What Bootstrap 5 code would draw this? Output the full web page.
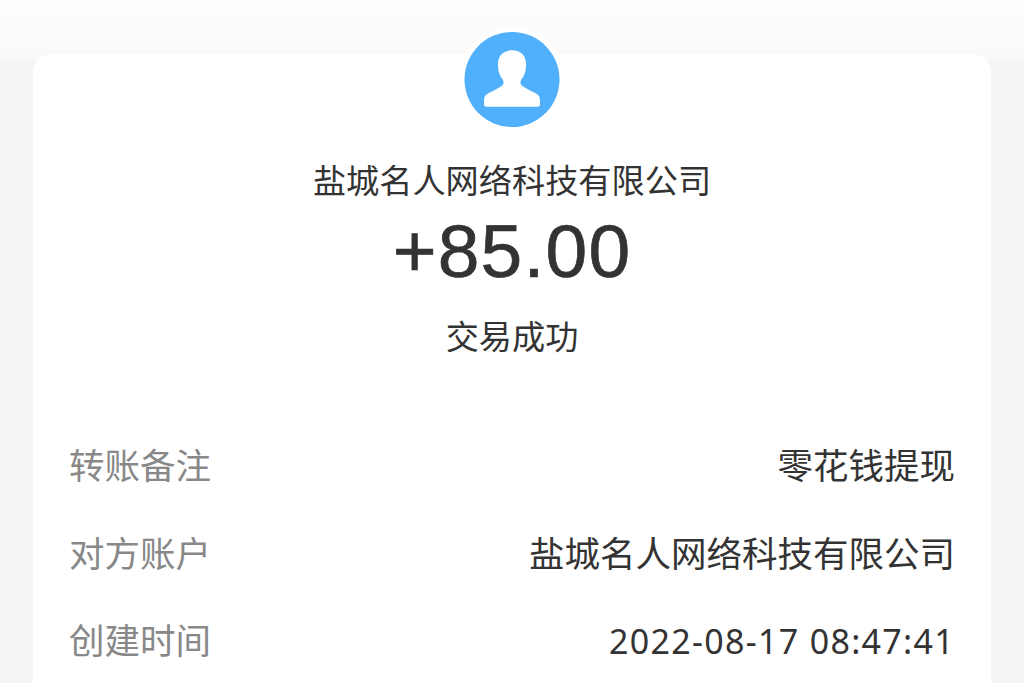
<!DOCTYPE html>
<html lang="zh-CN">
<head>
<meta charset="utf-8">
<meta name="viewport" content="width=device-width, initial-scale=1">
<title>交易详情</title>
<link href="https://cdn.jsdelivr.net/npm/bootstrap@5.3.0/dist/css/bootstrap.min.css" rel="stylesheet">
<style>
body{height:683px;background:linear-gradient(#fefefe 0,#f9f9f9 58px,#f5f5f5 64px,#f5f5f5 100%);color:#333;font-family:"Noto Sans","Noto Sans CJK SC",sans-serif}
.bill{margin:53px 33px 0;height:630px;border-radius:20px 20px 0 0;padding:0 36px}
.avatar{width:108px;height:108px;margin-top:-27px}
.payee,.state{font-family:"Noto Sans CJK SC",sans-serif;font-size:33.2px;line-height:48px}
.payee{margin-top:21px}
.amount{font-family:"Liberation Sans",sans-serif;font-size:75px;line-height:84px;letter-spacing:1.2px;-webkit-text-stroke:.7px #333;margin-top:6px}
.state{margin-top:18px}
.details{margin-top:79px}
.entry{height:87.5px;font-family:"Noto Sans CJK SC",sans-serif;font-size:35.5px;line-height:52px}
.entry dt{color:#888}
.stamp{font-family:"Noto Sans",sans-serif;font-size:34px;letter-spacing:1.3px;padding-top:2px}
</style>
</head>
<body class="overflow-hidden">
<main class="bill bg-white d-flex flex-column">
<header class="d-flex flex-column align-items-center">
<svg class="avatar" viewBox="0 0 108 108" aria-hidden="true">
<circle cx="54" cy="54" r="53" fill="#fff"/>
<circle cx="54" cy="53.5" r="47.5" fill="#50b0fc"/>
<path fill="#fff" d="M54 24.300C45 24.300 40 30 40 38C40 45.500 41.500 49.500 44.800 53.500C46.200 56.500 45.500 58.500 43.500 60C39.500 63 34.500 65 30 67.500C27.200 69.300 26 71 26 74V78.500Q26 80.800 28.500 80.800H79.500Q82 80.800 82 78.500V74C82 71 80.800 69.300 78 67.500C73.500 65 68.500 63 64.500 60C62.500 58.500 61.800 56.500 63.200 53.500C66.500 49.500 68 45.500 68 38C68 30 63 24.300 54 24.300Z"/>
</svg>
<div class="payee">盐城名人网络科技有限公司</div>
<div class="amount">+85.00</div>
<div class="state">交易成功</div>
</header>
<dl class="details mb-0">
<div class="entry d-flex justify-content-between"><dt class="fw-normal">转账备注</dt><dd class="mb-0">零花钱提现</dd></div>
<div class="entry d-flex justify-content-between"><dt class="fw-normal">对方账户</dt><dd class="mb-0">盐城名人网络科技有限公司</dd></div>
<div class="entry d-flex justify-content-between"><dt class="fw-normal">创建时间</dt><dd class="stamp mb-0">2022-08-17 08:47:41</dd></div>
</dl>
</main>
<script src="https://cdn.jsdelivr.net/npm/bootstrap@5.3.0/dist/js/bootstrap.bundle.min.js"></script>
</body>
</html>
